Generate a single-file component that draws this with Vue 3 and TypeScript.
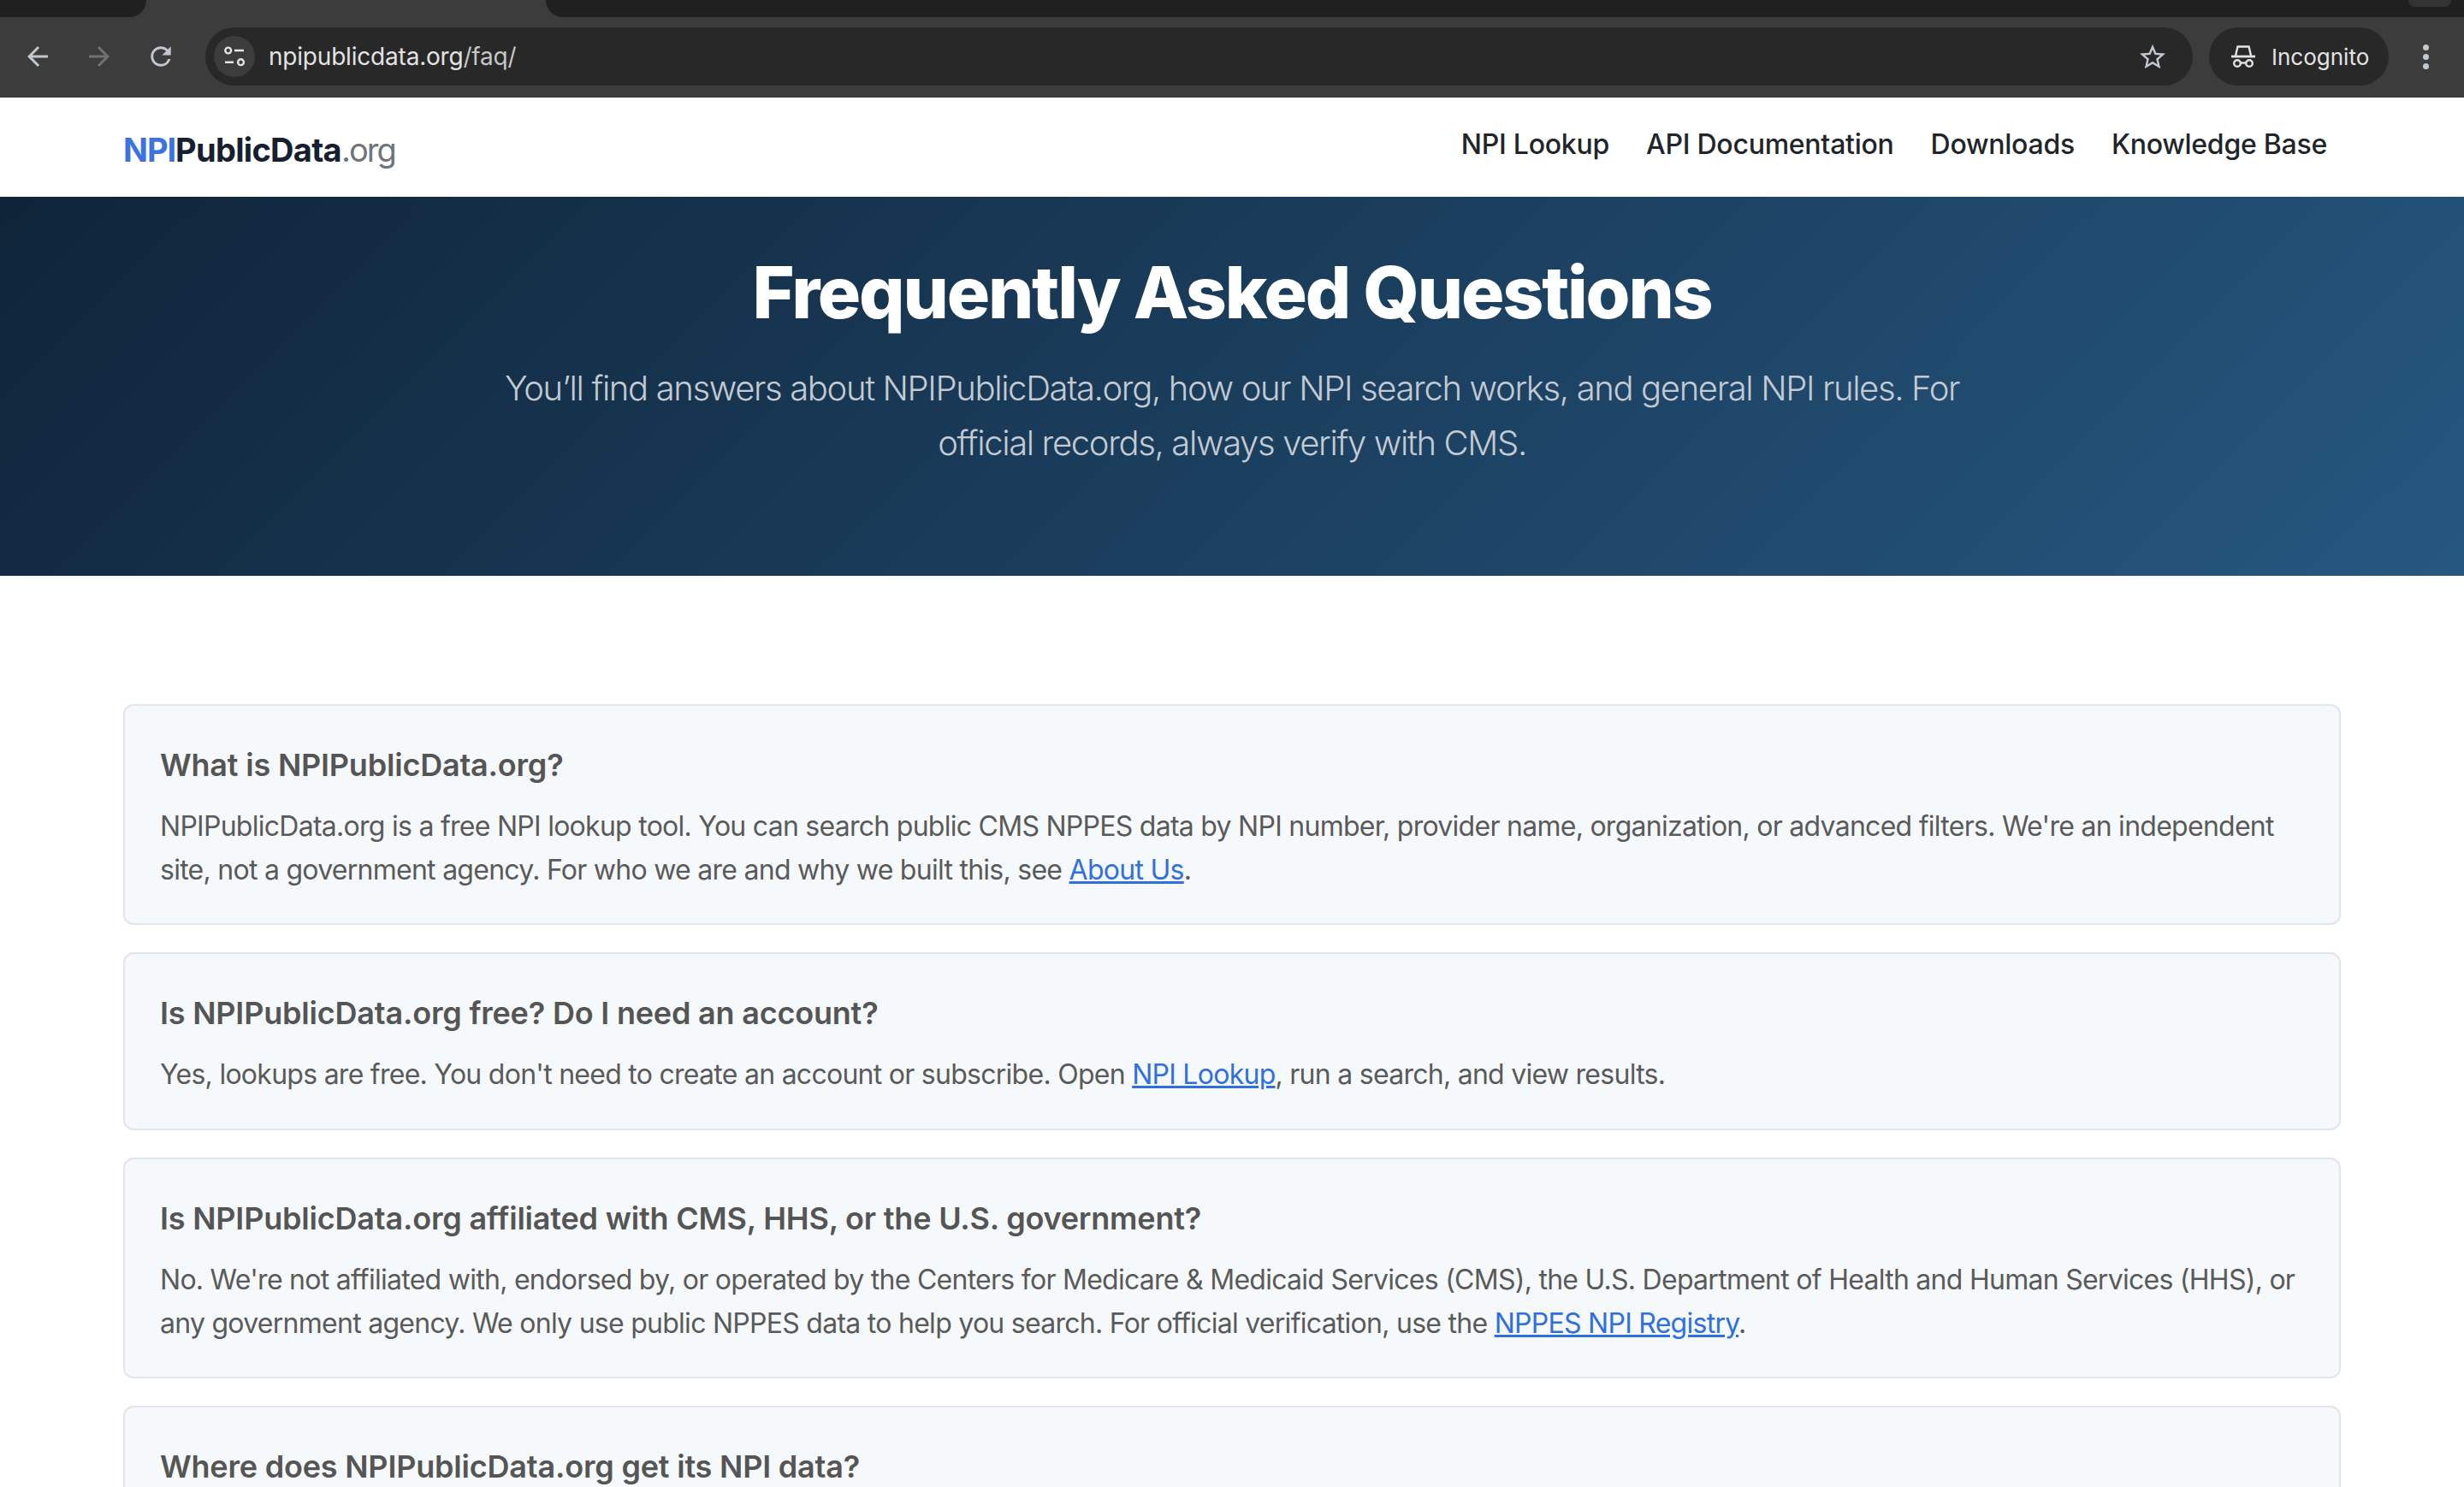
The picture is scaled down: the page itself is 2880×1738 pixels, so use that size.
<script setup lang="ts">
// FAQ page inside an incognito browser window
const navLinks = ['NPI Lookup', 'API Documentation', 'Downloads', 'Knowledge Base']
</script>

<template>
  <div class="window">
    <div class="browser-chrome">
      <div class="tabstrip">
        <div class="tab-dark tab-left" />
        <div class="tab-active" />
        <div class="tab-dark tab-right"><span class="tab-search" /></div>
      </div>

      <div class="toolbar">
        <div class="nav-buttons">
          <svg class="tb-icon" viewBox="4 4 16 16" fill="#c2c8ce">
            <path d="M20 11H7.83l5.59-5.59L12 4l-8 8 8 8 1.41-1.41L7.83 13H20v-2z" />
          </svg>
          <svg class="tb-icon" viewBox="4 4 16 16" fill="#6f7173">
            <path d="M12 4l-1.41 1.41L16.17 11H4v2h12.17l-5.58 5.59L12 20l8-8z" />
          </svg>
          <svg class="tb-icon" viewBox="3.8 3.8 16.4 16.4" fill="#c2c8ce">
            <path d="M17.65 6.35A7.958 7.958 0 0 0 12 4c-4.42 0-7.99 3.58-7.99 8s3.57 8 7.99 8c3.73 0 6.84-2.55 7.73-6h-2.08A5.99 5.99 0 0 1 12 18c-3.31 0-6-2.69-6-6s2.69-6 6-6c1.66 0 3.14.69 4.22 1.78L13 11h7V4l-2.35 2.35z" />
          </svg>
        </div>

        <div class="omnibox">
          <span class="site-info">
            <svg width="24" height="24" viewBox="0 0 24 24" fill="none" stroke="#e3e3e3" stroke-width="2.4">
              <circle cx="4.7" cy="5" r="3.4" />
              <path d="M12 5h11M1 18.7h10" />
              <circle cx="19.5" cy="18.7" r="3.4" />
            </svg>
          </span>
          <span class="url">npipublicdata.org<span class="url-dim">/faq/</span></span>
          <svg class="star" viewBox="2 1.5 20 20" fill="#c2c8ce" fill-rule="evenodd">
            <path d="M22 9.24l-7.19-.62L12 2 9.19 8.63 2 9.24l5.46 4.73L5.82 21 12 17.27 18.18 21l-1.63-7.03L22 9.24zM12 15.4l-3.76 2.27 1-4.28-3.32-2.88 4.38-.38L12 6.1l1.71 4.04 4.38.38-3.32 2.88 1 4.28L12 15.4z" />
          </svg>
        </div>

        <div class="incognito">
          <svg width="28" height="26" viewBox="0 0 28 26" fill="none" stroke="#e3e3e3" stroke-width="2.4">
            <path d="M5 12 7.5 1.5h13L23 12" />
            <path d="M0 13h28" stroke-width="2.8" />
            <circle cx="7" cy="21" r="3.8" />
            <circle cx="21" cy="21" r="3.8" />
            <path d="M11 20.5h6" />
          </svg>
          <span>Incognito</span>
        </div>

        <div class="kebab"><i /><i /><i /></div>
      </div>
    </div>

    <header class="site-header">
      <a class="logo"><span class="logo-npi">NPI</span>PublicData<span class="logo-org">.org</span></a>
      <nav class="site-nav">
        <a v-for="link in navLinks" :key="link">{{ link }}</a>
      </nav>
    </header>

    <section class="hero">
      <h1>Frequently Asked Questions</h1>
      <p>You’ll find answers about NPIPublicData.org, how our NPI search works, and general NPI rules. For official records, always verify with CMS.</p>
    </section>

    <main class="faq">
      <article class="card">
        <h2>What is NPIPublicData.org?</h2>
        <p>NPIPublicData.org is a free NPI lookup tool. You can search public CMS NPPES data by NPI number, provider name, organization, or advanced filters. We're an independent site, not a government agency. For who we are and why we built this, see <a>About Us</a>.</p>
      </article>
      <article class="card">
        <h2>Is NPIPublicData.org free? Do I need an account?</h2>
        <p>Yes, lookups are free. You don't need to create an account or subscribe. Open <a>NPI Lookup</a>, run a search, and view results.</p>
      </article>
      <article class="card">
        <h2>Is NPIPublicData.org affiliated with CMS, HHS, or the U.S. government?</h2>
        <p>No. We're not affiliated with, endorsed by, or operated by the Centers for Medicare &amp; Medicaid Services (CMS), the U.S. Department of Health and Human Services (HHS), or any government agency. We only use public NPPES data to help you search. For official verification, use the <a>NPPES NPI Registry</a>.</p>
      </article>
      <article class="card card-cut">
        <h2>Where does NPIPublicData.org get its NPI data?</h2>
      </article>
    </main>
  </div>
</template>

<style>
html,
body {
  margin: 0;
  background: #fff;
}
</style>

<style scoped>
.window {
  width: 2880px;
  height: 1738px;
  overflow: hidden;
  font-family: Inter, "Liberation Sans", sans-serif;
  background: #fff;
}

.browser-chrome {
  background: #202020;
}

.tabstrip {
  display: flex;
  height: 20px;
  background: #3c3c3c;
}

.tab-dark {
  background: #202020;
}

.tab-left {
  width: 171px;
  border-bottom-right-radius: 22px;
}

.tab-active {
  width: 467px;
}

.tab-right {
  flex: 1;
  border-bottom-left-radius: 22px;
  display: flex;
  justify-content: flex-end;
  padding-right: 15px;
}

.tab-search {
  width: 50px;
  height: 8px;
  background: #333;
  border-radius: 0 0 20px 20px;
}

.toolbar {
  display: flex;
  align-items: center;
  height: 94px;
  box-sizing: border-box;
  padding-bottom: 2px;
  background: #3c3c3c;
}

.nav-buttons {
  display: flex;
  flex: none;
  gap: 48px;
  padding-left: 32px;
  width: 240px;
  box-sizing: border-box;
}

.tb-icon {
  flex: none;
  width: 24px;
  height: 24px;
}

.omnibox {
  display: flex;
  flex: none;
  align-items: center;
  width: 2323px;
  height: 68px;
  box-sizing: border-box;
  padding: 0 32px 0 10px;
  border-radius: 34px;
  background: #282828;
}

.site-info {
  display: flex;
  align-items: center;
  justify-content: center;
  width: 48px;
  height: 48px;
  border-radius: 50%;
  background: #3c3c3c;
}

.url {
  margin-left: 16px;
  flex: 1;
  font-size: 28px;
  letter-spacing: -0.2px;
  color: #e3e3e3;
}

.url-dim {
  color: #c4c7c5;
}

.star {
  width: 30px;
  height: 30px;
}

.incognito {
  display: flex;
  flex: none;
  align-items: center;
  gap: 19px;
  width: 210px;
  height: 68px;
  box-sizing: border-box;
  margin-left: 19px;
  padding-left: 26px;
  border-radius: 34px;
  background: #282828;
  font-size: 26px;
  color: #e3e3e3;
}

.kebab {
  display: flex;
  flex-direction: column;
  gap: 4px;
  margin-left: 40px;
}

.kebab i {
  display: block;
  width: 7px;
  height: 7px;
  border-radius: 50%;
  background: #c2c8ce;
}

.site-header {
  display: flex;
  align-items: center;
  justify-content: space-between;
  height: 116px;
  padding: 0 160px 0 144px;
  background: #fff;
}

.logo {
  font-size: 38px;
  font-weight: 700;
  letter-spacing: -0.7px;
  color: #16202e;
  margin-top: 6px;
}

.logo-npi {
  letter-spacing: -1.05px;
  color: #3b74e0;
}

.logo-org {
  font-weight: 400;
  letter-spacing: -2px;
  color: #6c757d;
}

.site-nav {
  display: flex;
  gap: 43px;
  margin-top: -8px;
}

.site-nav a {
  font-size: 32px;
  font-weight: 500;
  letter-spacing: -0.25px;
  color: #212529;
}

.hero {
  height: 443px;
  box-sizing: border-box;
  padding-top: 62px;
  text-align: center;
  background: linear-gradient(135deg, #0f2439 0%, #265780 100%);
}

.hero h1 {
  margin: 0;
  font-size: 84px;
  line-height: 100px;
  font-weight: 800;
  letter-spacing: -2.2px;
  color: #fff;
}

.hero p {
  width: 1720px;
  margin: 30px auto 0;
  font-size: 40px;
  line-height: 64px;
  font-weight: 300;
  letter-spacing: -1.36px;
  color: #c3cad2;
}

.faq {
  display: flex;
  flex-direction: column;
  gap: 32px;
  padding: 150px 144px 0;
}

.card {
  box-sizing: border-box;
  padding: 41px 41px 37px;
  border: 2px solid #e2e6ea;
  border-radius: 12px;
  background: #f6f9fb;
}

.card-cut {
  min-height: 260px;
}

.card h2 {
  margin: 0 0 18px;
  font-size: 36px;
  line-height: 56px;
  font-weight: 600;
  letter-spacing: -0.2px;
  color: #555;
}

.card p {
  margin: 0;
  font-size: 32px;
  line-height: 51.2px;
  letter-spacing: -0.73px;
  color: #5a5a5a;
}

.card a {
  color: #2f6fde;
  text-decoration: underline;
}
</style>
